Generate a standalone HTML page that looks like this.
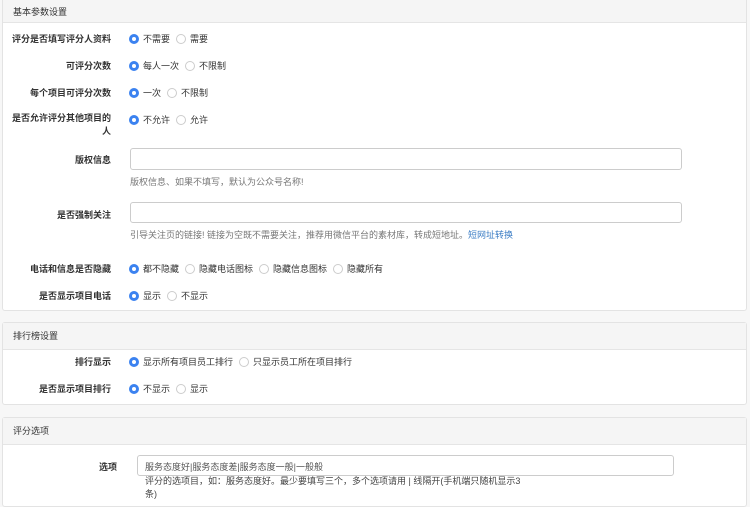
<!DOCTYPE html>
<html><head><meta charset="utf-8"><style>
*{margin:0;padding:0;box-sizing:border-box}
body{width:750px;height:498px;overflow:hidden;background:#f7f7f7;font-family:"Liberation Sans","Noto Sans CJK SC",sans-serif;font-size:9px;color:#333;position:relative}
.p{position:absolute;left:2px;width:745px;background:#fff;border:1px solid #e3e3e3;border-radius:3px}
.h{background:#f5f5f5;border-bottom:1px solid #e5e5e5;height:27px;line-height:27px;padding-left:10px;color:#333}
.a{position:absolute}
.l{position:absolute;font-weight:bold;text-align:right;color:#333}
.r{position:absolute;display:flex;align-items:center;white-space:nowrap;color:#333}
.on,.off{display:inline-block;width:10px;height:10px;border-radius:50%;margin-right:4px}
.on{background:#fff;border:3px solid #3b82f0}
.off{border:1px solid #ccc;background:#fff}
.g{margin-right:6px}
.in{position:absolute;border:1px solid #ccc;border-radius:3px;background:#fff}
.help{position:absolute;color:#777}
</style></head><body>
<div class="p" style="top:-3px;height:314px">
<div class="h" style="height:25px;line-height:28px">基本参数设置</div></div>
<div class="l" style="left:0;width:111px;top:32px">评分是否填写评分人资料</div>
<div class="r" style="left:129px;top:32px"><span class="on"></span><span class="g">不需要</span><span class="off"></span>需要</div>
<div class="l" style="left:0;width:111px;top:59px">可评分次数</div>
<div class="r" style="left:129px;top:59px"><span class="on"></span><span class="g">每人一次</span><span class="off"></span>不限制</div>
<div class="l" style="left:0;width:111px;top:86px">每个项目可评分次数</div>
<div class="r" style="left:129px;top:86px"><span class="on"></span><span class="g">一次</span><span class="off"></span>不限制</div>
<div class="l" style="left:8px;width:103px;top:112px;line-height:13px">是否允许评分其他项目的人</div>
<div class="r" style="left:129px;top:113px"><span class="on"></span><span class="g">不允许</span><span class="off"></span>允许</div>
<div class="l" style="left:0;width:111px;top:153px">版权信息</div>
<div class="in" style="left:130px;top:148px;width:552px;height:22px"></div>
<div class="help" style="left:130px;top:175px">版权信息、如果不填写，默认为公众号名称!</div>
<div class="l" style="left:0;width:111px;top:208px">是否强制关注</div>
<div class="in" style="left:130px;top:202px;width:552px;height:21px"></div>
<div class="help" style="left:130px;top:228px">引导关注页的链接! 链接为空既不需要关注，推荐用微信平台的素材库，转成短地址。<span style="color:#3a7cc4">短网址转换</span></div>
<div class="l" style="left:0;width:111px;top:262px">电话和信息是否隐藏</div>
<div class="r" style="left:129px;top:262px"><span class="on"></span><span class="g">都不隐藏</span><span class="off"></span><span class="g">隐藏电话图标</span><span class="off"></span><span class="g">隐藏信息图标</span><span class="off"></span>隐藏所有</div>
<div class="l" style="left:0;width:111px;top:289px">是否显示项目电话</div>
<div class="r" style="left:129px;top:289px"><span class="on"></span><span class="g">显示</span><span class="off"></span>不显示</div>

<div class="p" style="top:322px;height:83px"><div class="h">排行榜设置</div></div>
<div class="l" style="left:0;width:111px;top:355px">排行显示</div>
<div class="r" style="left:129px;top:355px"><span class="on"></span><span class="g">显示所有项目员工排行</span><span class="off"></span>只显示员工所在项目排行</div>
<div class="l" style="left:0;width:111px;top:382px">是否显示项目排行</div>
<div class="r" style="left:129px;top:382px"><span class="on"></span><span class="g">不显示</span><span class="off"></span>显示</div>

<div class="p" style="top:417px;height:90px"><div class="h">评分选项</div></div>
<div class="l" style="left:0;width:117px;top:460px">选项</div>
<div class="in" style="left:137px;top:455px;width:537px;height:21px"></div>
<div class="a" style="left:145px;top:460px;color:#555">服务态度好|服务态度差|服务态度一般|一般般</div>
<div class="help" style="left:145px;top:475px;width:378px;line-height:13px;color:#444">评分的选项目，如：服务态度好。最少要填写三个，多个选项请用 | 线隔开(手机端只随机显示3条)</div>
</body></html>
